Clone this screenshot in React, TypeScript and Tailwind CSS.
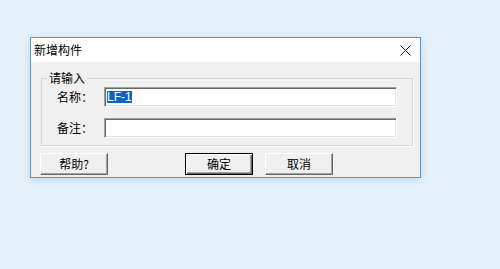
import React from "react";

const cjk = '"Microsoft YaHei", "Noto Sans CJK SC", "Liberation Sans", sans-serif';

function CloseIcon() {
  return (
    <svg width="11" height="11" viewBox="0 0 11 11" className="block">
      <path d="M0.5 0.5 L10.5 10.5 M10.5 0.5 L0.5 10.5" stroke="#1a1a1a" strokeWidth="1" fill="none" />
    </svg>
  );
}

function Button({ label, isDefault }: { label: string; isDefault?: boolean }) {
  return (
    <button
      className={
        "w-[68px] h-[22px] bg-[#f0f0f0] text-[12px] text-black leading-none flex items-center justify-center " +
        (isDefault
          ? "border border-[#000] shadow-[inset_1px_1px_0_#fff,inset_-1px_-1px_0_#696969,inset_-2px_-2px_0_#a0a0a0]"
          : "border border-t-white border-l-white border-b-[#696969] border-r-[#696969] shadow-[inset_-1px_-1px_0_#a0a0a0]")
      }
      style={{ fontFamily: cjk }}
    >
      {label}
    </button>
  );
}

function Field({ label, value, selected }: { label: string; value?: string; selected?: boolean }) {
  return (
    <div className="flex items-center h-[20px]">
      <span className="w-[47px] pl-[15px] text-[12px] text-black whitespace-nowrap box-content">{label}</span>
      <div className="w-[293px] h-[20px] bg-white border border-t-[#a0a0a0] border-l-[#a0a0a0] border-b-white border-r-white shadow-[inset_1px_1px_0_#696969,inset_-1px_-1px_0_#e3e3e3] flex items-center pl-[2px]">
        {value && (
          <span
            className={
              "text-[12px] leading-[12px] px-[0px] " + (selected ? "bg-[#0a64c8] text-white" : "text-black")
            }
            style={{ fontFamily: '"Liberation Sans", sans-serif' }}
          >
            {value}
          </span>
        )}
      </div>
    </div>
  );
}

export default function App() {
  return (
    <div className="w-[500px] h-[269px] bg-[#e5f2fb] pt-[37px] pl-[30px]" style={{ fontFamily: cjk }}>
      <div className="w-[391px] h-[141px] border border-[#4a9bd8] flex flex-col shadow-[0_2px_8px_rgba(0,0,0,0.12)]">
        {/* Title bar */}
        <div className="h-[24px] bg-white flex items-center justify-between pl-[3px] pr-[9px]">
          <span className="text-[12px] text-black">新增构件</span>
          <CloseIcon />
        </div>

        {/* Client area */}
        <div className="flex-1 bg-[#f0f0f0] flex flex-col pl-[9px] pr-[7px] pt-[10px]">
          <fieldset className="ml-[1px] border border-[#d5d5d5] h-[74px] shadow-[1px_1px_0_#fff]">
            <legend className="ml-[5px] px-[2px] text-[12px] leading-[12px] text-black">请输入</legend>
            <div className="flex flex-col gap-[11px] pt-[3px]">
              <Field label="名称：" value="LF-1" selected />
              <Field label="备注：" />
            </div>
          </fieldset>

          <div className="flex mt-[7px]">
            <Button label="帮助?" />
            <div className="ml-[77px] flex gap-[12px]">
              <Button label="确定" isDefault />
              <Button label="取消" />
            </div>
          </div>
        </div>
      </div>
    </div>
  );
}
